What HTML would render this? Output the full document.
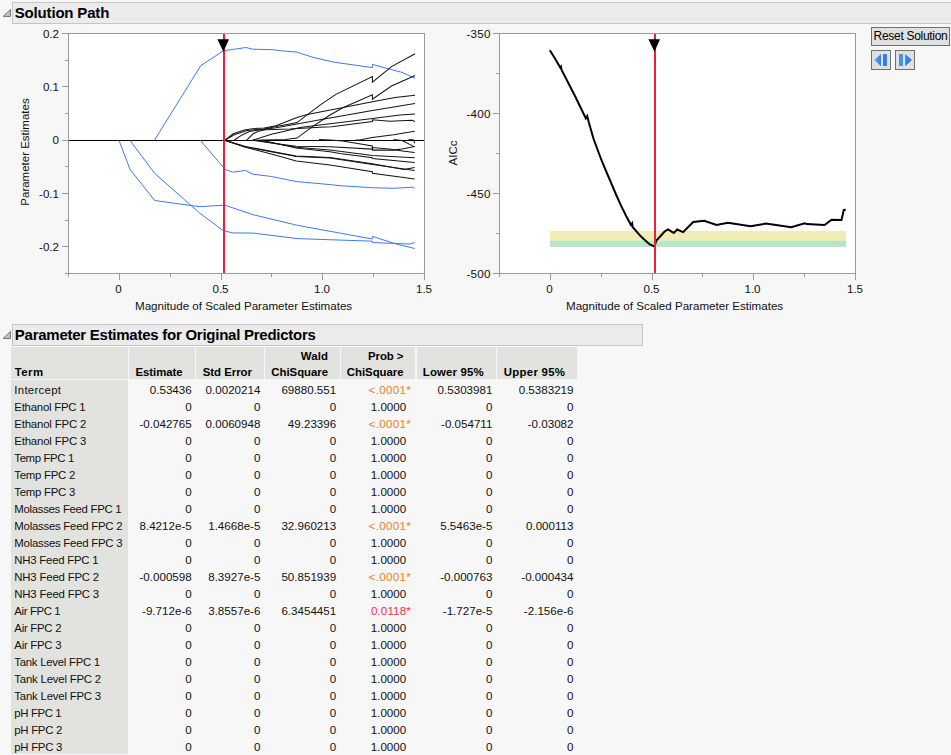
<!DOCTYPE html>
<html><head><meta charset="utf-8"><title>Solution Path</title>
<style>
html,body{margin:0;padding:0}
body{width:951px;height:755px;overflow:hidden;background:#f7f7f7;position:relative;font-family:"Liberation Sans",sans-serif;color:#111111}
.hdr{position:absolute;left:12px;background:#ebebeb;border:1px solid #c6c6c6;box-sizing:border-box;height:22px}
.hdr span{position:absolute;left:1.8px;top:0.5px;font-weight:bold;font-size:15px;line-height:17px;white-space:nowrap;color:#000}
.ax{position:absolute;font-size:11.6px;line-height:14px;white-space:nowrap;color:#111111}
.yl{text-align:right;width:40px}
.xl{text-align:center;width:40px}
.rot{position:absolute;font-size:11.5px;line-height:14px;white-space:nowrap;transform-origin:center center;transform:translate(-50%,-50%) rotate(-90deg)}
.th{position:absolute;background:#e2e2de;top:347px;height:32px}
.th i{font-style:normal}
.th span{position:absolute;right:12px;bottom:-0.5px;font-weight:bold;font-size:11.4px;line-height:16px;text-align:right;white-space:nowrap;color:#000}
.t{position:absolute;font-size:11.6px;line-height:15px;white-space:nowrap}
.term{left:14.3px;font-size:11.4px}
.num{text-align:right}
.org{color:#ee7f22;letter-spacing:0.3px}
.red{color:#ee3050;letter-spacing:0.1px}
.star{position:absolute;left:100%;top:0}
.btn{position:absolute;background:#e1e1e1;border:1px solid #707070;box-sizing:border-box}
</style></head><body>
<div class="hdr" style="top:2px;width:945px"><span style="letter-spacing:-0.18px">Solution Path</span></div>
<div class="hdr" style="top:324px;width:631px"><span style="letter-spacing:-0.255px">Parameter Estimates for Original Predictors</span></div>
<div style="position:absolute;left:11px;top:380px;width:117px;height:373.5px;background:#e2e2de"></div>
<div class="th" style="left:11px;width:117px"><span style="left:3.7px;right:auto"><i style="letter-spacing:0.446px;margin-right:-0.446px">Term</i></span></div>
<div class="th" style="left:129px;width:65.5px"><span><i style="letter-spacing:-0.073px;margin-right:0.073px">Estimate</i></span></div>
<div class="th" style="left:195.6px;width:68.4px"><span><i style="letter-spacing:-0.008px;margin-right:0.008px">Std Error</i></span></div>
<div class="th" style="left:265.3px;width:74.7px"><span><i style="letter-spacing:0.176px;margin-right:-0.176px">Wald</i><br><i style="letter-spacing:-0.041px;margin-right:0.041px">ChiSquare</i></span></div>
<div class="th" style="left:341.3px;width:74.2px"><span><i style="letter-spacing:-0.061px;margin-right:0.061px">Prob &gt;</i><br><i style="letter-spacing:-0.041px;margin-right:0.041px">ChiSquare</i></span></div>
<div class="th" style="left:416.9px;width:78.8px"><span><i style="letter-spacing:0.165px;margin-right:-0.165px">Lower 95%</i></span></div>
<div class="th" style="left:497px;width:80px"><span><i style="letter-spacing:0.292px;margin-right:-0.292px">Upper 95%</i></span></div>
<div class="t term" style="top:383.0px;letter-spacing:0.297px">Intercept</div>
<div class="t num" style="top:382.3px;right:759.3px">0.53436</div>
<div class="t num" style="top:382.3px;right:690.6px">0.0020214</div>
<div class="t num" style="top:382.3px;right:614.8px">69880.551</div>
<div class="t num" style="top:382.3px;right:458.6px">0.5303981</div>
<div class="t num" style="top:382.3px;right:377.5px">0.5383219</div>
<div class="t num org" style="top:382.3px;right:544.8px">&lt;.0001<span class="star">*</span></div>
<div class="t term" style="top:400.0px;letter-spacing:-0.237px">Ethanol FPC 1</div>
<div class="t num" style="top:399.3px;right:759.3px">0</div>
<div class="t num" style="top:399.3px;right:690.6px">0</div>
<div class="t num" style="top:399.3px;right:614.8px">0</div>
<div class="t num" style="top:399.3px;right:458.6px">0</div>
<div class="t num" style="top:399.3px;right:377.5px">0</div>
<div class="t num" style="top:399.3px;right:544.8px">1.0000</div>
<div class="t term" style="top:417.0px;letter-spacing:-0.175px">Ethanol FPC 2</div>
<div class="t num" style="top:416.3px;right:759.3px">-0.042765</div>
<div class="t num" style="top:416.3px;right:690.6px">0.0060948</div>
<div class="t num" style="top:416.3px;right:614.8px">49.23396</div>
<div class="t num" style="top:416.3px;right:458.6px">-0.054711</div>
<div class="t num" style="top:416.3px;right:377.5px">-0.03082</div>
<div class="t num org" style="top:416.3px;right:544.8px">&lt;.0001<span class="star">*</span></div>
<div class="t term" style="top:434.0px;letter-spacing:-0.175px">Ethanol FPC 3</div>
<div class="t num" style="top:433.3px;right:759.3px">0</div>
<div class="t num" style="top:433.3px;right:690.6px">0</div>
<div class="t num" style="top:433.3px;right:614.8px">0</div>
<div class="t num" style="top:433.3px;right:458.6px">0</div>
<div class="t num" style="top:433.3px;right:377.5px">0</div>
<div class="t num" style="top:433.3px;right:544.8px">1.0000</div>
<div class="t term" style="top:451.0px;letter-spacing:-0.361px">Temp FPC 1</div>
<div class="t num" style="top:450.3px;right:759.3px">0</div>
<div class="t num" style="top:450.3px;right:690.6px">0</div>
<div class="t num" style="top:450.3px;right:614.8px">0</div>
<div class="t num" style="top:450.3px;right:458.6px">0</div>
<div class="t num" style="top:450.3px;right:377.5px">0</div>
<div class="t num" style="top:450.3px;right:544.8px">1.0000</div>
<div class="t term" style="top:468.0px;letter-spacing:-0.251px">Temp FPC 2</div>
<div class="t num" style="top:467.3px;right:759.3px">0</div>
<div class="t num" style="top:467.3px;right:690.6px">0</div>
<div class="t num" style="top:467.3px;right:614.8px">0</div>
<div class="t num" style="top:467.3px;right:458.6px">0</div>
<div class="t num" style="top:467.3px;right:377.5px">0</div>
<div class="t num" style="top:467.3px;right:544.8px">1.0000</div>
<div class="t term" style="top:485.0px;letter-spacing:-0.251px">Temp FPC 3</div>
<div class="t num" style="top:484.3px;right:759.3px">0</div>
<div class="t num" style="top:484.3px;right:690.6px">0</div>
<div class="t num" style="top:484.3px;right:614.8px">0</div>
<div class="t num" style="top:484.3px;right:458.6px">0</div>
<div class="t num" style="top:484.3px;right:377.5px">0</div>
<div class="t num" style="top:484.3px;right:544.8px">1.0000</div>
<div class="t term" style="top:502.0px;letter-spacing:-0.299px">Molasses Feed FPC 1</div>
<div class="t num" style="top:501.3px;right:759.3px">0</div>
<div class="t num" style="top:501.3px;right:690.6px">0</div>
<div class="t num" style="top:501.3px;right:614.8px">0</div>
<div class="t num" style="top:501.3px;right:458.6px">0</div>
<div class="t num" style="top:501.3px;right:377.5px">0</div>
<div class="t num" style="top:501.3px;right:544.8px">1.0000</div>
<div class="t term" style="top:519.0px;letter-spacing:-0.247px">Molasses Feed FPC 2</div>
<div class="t num" style="top:518.3px;right:759.3px">8.4212e-5</div>
<div class="t num" style="top:518.3px;right:690.6px">1.4668e-5</div>
<div class="t num" style="top:518.3px;right:614.8px">32.960213</div>
<div class="t num" style="top:518.3px;right:458.6px">5.5463e-5</div>
<div class="t num" style="top:518.3px;right:377.5px">0.000113</div>
<div class="t num org" style="top:518.3px;right:544.8px">&lt;.0001<span class="star">*</span></div>
<div class="t term" style="top:536.0px;letter-spacing:-0.247px">Molasses Feed FPC 3</div>
<div class="t num" style="top:535.3px;right:759.3px">0</div>
<div class="t num" style="top:535.3px;right:690.6px">0</div>
<div class="t num" style="top:535.3px;right:614.8px">0</div>
<div class="t num" style="top:535.3px;right:458.6px">0</div>
<div class="t num" style="top:535.3px;right:377.5px">0</div>
<div class="t num" style="top:535.3px;right:544.8px">1.0000</div>
<div class="t term" style="top:553.0px;letter-spacing:-0.234px">NH3 Feed FPC 1</div>
<div class="t num" style="top:552.3px;right:759.3px">0</div>
<div class="t num" style="top:552.3px;right:690.6px">0</div>
<div class="t num" style="top:552.3px;right:614.8px">0</div>
<div class="t num" style="top:552.3px;right:458.6px">0</div>
<div class="t num" style="top:552.3px;right:377.5px">0</div>
<div class="t num" style="top:552.3px;right:544.8px">1.0000</div>
<div class="t term" style="top:570.0px;letter-spacing:-0.191px">NH3 Feed FPC 2</div>
<div class="t num" style="top:569.3px;right:759.3px">-0.000598</div>
<div class="t num" style="top:569.3px;right:690.6px">8.3927e-5</div>
<div class="t num" style="top:569.3px;right:614.8px">50.851939</div>
<div class="t num" style="top:569.3px;right:458.6px">-0.000763</div>
<div class="t num" style="top:569.3px;right:377.5px">-0.000434</div>
<div class="t num org" style="top:569.3px;right:544.8px">&lt;.0001<span class="star">*</span></div>
<div class="t term" style="top:587.0px;letter-spacing:-0.191px">NH3 Feed FPC 3</div>
<div class="t num" style="top:586.3px;right:759.3px">0</div>
<div class="t num" style="top:586.3px;right:690.6px">0</div>
<div class="t num" style="top:586.3px;right:614.8px">0</div>
<div class="t num" style="top:586.3px;right:458.6px">0</div>
<div class="t num" style="top:586.3px;right:377.5px">0</div>
<div class="t num" style="top:586.3px;right:544.8px">1.0000</div>
<div class="t term" style="top:604.0px;letter-spacing:-0.375px">Air FPC 1</div>
<div class="t num" style="top:603.3px;right:759.3px">-9.712e-6</div>
<div class="t num" style="top:603.3px;right:690.6px">3.8557e-6</div>
<div class="t num" style="top:603.3px;right:614.8px">6.3454451</div>
<div class="t num" style="top:603.3px;right:458.6px">-1.727e-5</div>
<div class="t num" style="top:603.3px;right:377.5px">-2.156e-6</div>
<div class="t num red" style="top:603.3px;right:544.8px">0.0118<span class="star">*</span></div>
<div class="t term" style="top:621.0px;letter-spacing:-0.264px">Air FPC 2</div>
<div class="t num" style="top:620.3px;right:759.3px">0</div>
<div class="t num" style="top:620.3px;right:690.6px">0</div>
<div class="t num" style="top:620.3px;right:614.8px">0</div>
<div class="t num" style="top:620.3px;right:458.6px">0</div>
<div class="t num" style="top:620.3px;right:377.5px">0</div>
<div class="t num" style="top:620.3px;right:544.8px">1.0000</div>
<div class="t term" style="top:638.0px;letter-spacing:-0.264px">Air FPC 3</div>
<div class="t num" style="top:637.3px;right:759.3px">0</div>
<div class="t num" style="top:637.3px;right:690.6px">0</div>
<div class="t num" style="top:637.3px;right:614.8px">0</div>
<div class="t num" style="top:637.3px;right:458.6px">0</div>
<div class="t num" style="top:637.3px;right:377.5px">0</div>
<div class="t num" style="top:637.3px;right:544.8px">1.0000</div>
<div class="t term" style="top:655.0px;letter-spacing:-0.269px">Tank Level FPC 1</div>
<div class="t num" style="top:654.3px;right:759.3px">0</div>
<div class="t num" style="top:654.3px;right:690.6px">0</div>
<div class="t num" style="top:654.3px;right:614.8px">0</div>
<div class="t num" style="top:654.3px;right:458.6px">0</div>
<div class="t num" style="top:654.3px;right:377.5px">0</div>
<div class="t num" style="top:654.3px;right:544.8px">1.0000</div>
<div class="t term" style="top:672.0px;letter-spacing:-0.200px">Tank Level FPC 2</div>
<div class="t num" style="top:671.3px;right:759.3px">0</div>
<div class="t num" style="top:671.3px;right:690.6px">0</div>
<div class="t num" style="top:671.3px;right:614.8px">0</div>
<div class="t num" style="top:671.3px;right:458.6px">0</div>
<div class="t num" style="top:671.3px;right:377.5px">0</div>
<div class="t num" style="top:671.3px;right:544.8px">1.0000</div>
<div class="t term" style="top:689.0px;letter-spacing:-0.200px">Tank Level FPC 3</div>
<div class="t num" style="top:688.3px;right:759.3px">0</div>
<div class="t num" style="top:688.3px;right:690.6px">0</div>
<div class="t num" style="top:688.3px;right:614.8px">0</div>
<div class="t num" style="top:688.3px;right:458.6px">0</div>
<div class="t num" style="top:688.3px;right:377.5px">0</div>
<div class="t num" style="top:688.3px;right:544.8px">1.0000</div>
<div class="t term" style="top:706.0px;letter-spacing:-0.377px">pH FPC 1</div>
<div class="t num" style="top:705.3px;right:759.3px">0</div>
<div class="t num" style="top:705.3px;right:690.6px">0</div>
<div class="t num" style="top:705.3px;right:614.8px">0</div>
<div class="t num" style="top:705.3px;right:458.6px">0</div>
<div class="t num" style="top:705.3px;right:377.5px">0</div>
<div class="t num" style="top:705.3px;right:544.8px">1.0000</div>
<div class="t term" style="top:723.0px;letter-spacing:-0.289px">pH FPC 2</div>
<div class="t num" style="top:722.3px;right:759.3px">0</div>
<div class="t num" style="top:722.3px;right:690.6px">0</div>
<div class="t num" style="top:722.3px;right:614.8px">0</div>
<div class="t num" style="top:722.3px;right:458.6px">0</div>
<div class="t num" style="top:722.3px;right:377.5px">0</div>
<div class="t num" style="top:722.3px;right:544.8px">1.0000</div>
<div class="t term" style="top:740.0px;letter-spacing:-0.289px">pH FPC 3</div>
<div class="t num" style="top:739.3px;right:759.3px">0</div>
<div class="t num" style="top:739.3px;right:690.6px">0</div>
<div class="t num" style="top:739.3px;right:614.8px">0</div>
<div class="t num" style="top:739.3px;right:458.6px">0</div>
<div class="t num" style="top:739.3px;right:377.5px">0</div>
<div class="t num" style="top:739.3px;right:544.8px">1.0000</div>
<div class="btn" style="left:871px;top:27px;width:79px;height:19px"><span style="position:absolute;left:1.6px;top:1.2px;font-size:12px;letter-spacing:-0.3px;line-height:14px;white-space:nowrap;color:#000">Reset Solution</span></div>
<div class="btn" style="left:871px;top:50px;width:20px;height:20px"></div>
<div class="btn" style="left:895px;top:50px;width:20px;height:20px"></div>
<svg width="951" height="755" viewBox="0 0 951 755" style="position:absolute;left:0;top:0">
<!-- left plot -->
<rect x="68.5" y="33.5" width="356" height="240" fill="#fff" stroke="#9a9a9a" stroke-width="1"/>
<line x1="62" y1="33.5" x2="68" y2="33.5" stroke="#9a9a9a" stroke-width="1"/>
<line x1="65" y1="60.5" x2="68" y2="60.5" stroke="#9a9a9a" stroke-width="1"/>
<line x1="62" y1="86.5" x2="68" y2="86.5" stroke="#9a9a9a" stroke-width="1"/>
<line x1="65" y1="113.5" x2="68" y2="113.5" stroke="#9a9a9a" stroke-width="1"/>
<line x1="62" y1="140.5" x2="68" y2="140.5" stroke="#9a9a9a" stroke-width="1"/>
<line x1="65" y1="166.5" x2="68" y2="166.5" stroke="#9a9a9a" stroke-width="1"/>
<line x1="62" y1="193.5" x2="68" y2="193.5" stroke="#9a9a9a" stroke-width="1"/>
<line x1="65" y1="220.5" x2="68" y2="220.5" stroke="#9a9a9a" stroke-width="1"/>
<line x1="62" y1="246.5" x2="68" y2="246.5" stroke="#9a9a9a" stroke-width="1"/>
<line x1="65" y1="273.5" x2="68" y2="273.5" stroke="#9a9a9a" stroke-width="1"/>
<line x1="68.5" y1="273" x2="68.5" y2="277" stroke="#9a9a9a" stroke-width="1"/>
<line x1="119.5" y1="273" x2="119.5" y2="280" stroke="#9a9a9a" stroke-width="1"/>
<line x1="170.5" y1="273" x2="170.5" y2="277" stroke="#9a9a9a" stroke-width="1"/>
<line x1="221.5" y1="273" x2="221.5" y2="280" stroke="#9a9a9a" stroke-width="1"/>
<line x1="271.5" y1="273" x2="271.5" y2="277" stroke="#9a9a9a" stroke-width="1"/>
<line x1="322.5" y1="273" x2="322.5" y2="280" stroke="#9a9a9a" stroke-width="1"/>
<line x1="373.5" y1="273" x2="373.5" y2="277" stroke="#9a9a9a" stroke-width="1"/>
<line x1="424.5" y1="273" x2="424.5" y2="280" stroke="#9a9a9a" stroke-width="1"/>
<line x1="69" y1="140.5" x2="424" y2="140.5" stroke="#000" stroke-width="1.2"/>
<polyline points="119.0,140.3 129.9,169.2 154.7,200.5 199.8,206.7 224.6,205.1 253.1,214.7 297.3,225.3 372.3,239.0 372.3,236.4 396.6,244.1 414.7,248.5" fill="none" stroke="#3e7af4" stroke-width="1.0" stroke-linejoin="miter" />
<polyline points="129.9,140.3 154.7,173.4 199.8,213.2 223.1,230.6 232.7,232.9 253.1,233.1 297.3,238.6 372.3,241.2 372.3,242.5 409.8,244.1 414.7,242.5" fill="none" stroke="#3e7af4" stroke-width="1.0" stroke-linejoin="miter" />
<polyline points="154.4,140.3 200.7,65.7 223.4,50.8 245.9,47.5 252.7,49.2 272.2,49.7 280.0,50.7 296.1,52.0 313.9,57.6 334.2,62.2 372.4,67.6 372.4,64.4 390.2,69.3 402.0,72.4 415.1,78.3" fill="none" stroke="#3e7af4" stroke-width="1.0" stroke-linejoin="miter" />
<polyline points="200.3,140.3 223.1,167.0 225.0,169.4 232.7,172.2 245.4,170.4 253.0,174.2 270.8,176.4 296.2,181.5 330.0,184.6 340.0,185.7 372.4,187.7 393.6,188.3 412.6,187.2 414.7,188.3" fill="none" stroke="#3e7af4" stroke-width="1.0" stroke-linejoin="miter" />
<polyline points="224.7,140.3 234.7,134.6 247.2,130.5 254.6,129.8 264.2,129.0 275.9,126.4 290.0,123.9 297.0,122.6 320.7,104.6 335.9,94.4 372.4,76.6 372.4,82.2 391.9,66.4 415.1,53.7" fill="none" stroke="#151515" stroke-width="1.05" stroke-linejoin="miter" />
<polyline points="253.0,140.3 285.3,139.5 297.0,138.1 313.2,126.1 330.0,115.0 343.3,107.5 372.4,94.7 372.4,99.3 391.5,86.0 415.1,75.4" fill="none" stroke="#151515" stroke-width="1.05" stroke-linejoin="miter" />
<polyline points="224.7,140.3 233.2,133.8 244.3,130.1 252.4,128.7 264.2,127.9 275.9,125.7 290.0,120.2 297.0,117.4 306.2,114.8 320.0,112.1 343.3,107.5 372.4,101.7 395.0,97.5 415.0,95.2" fill="none" stroke="#151515" stroke-width="1.05" stroke-linejoin="miter" />
<polyline points="234.0,140.3 242.1,134.9 249.4,131.6 255.3,130.5 276.0,127.8 297.0,124.0 320.0,119.7 372.4,110.4 415.0,103.4" fill="none" stroke="#151515" stroke-width="1.05" stroke-linejoin="miter" />
<polyline points="252.4,140.3 271.5,134.2 290.0,130.1 300.0,127.5 320.0,125.0 372.4,118.6 400.0,115.0 415.0,113.9" fill="none" stroke="#151515" stroke-width="1.05" stroke-linejoin="miter" />
<polyline points="246.5,140.3 253.1,133.8 258.3,131.2 265.6,129.8 290.0,129.0 320.0,127.3 331.7,126.7 372.4,121.5 372.4,119.7 390.0,121.2 412.0,120.3 415.0,121.5" fill="none" stroke="#151515" stroke-width="1.05" stroke-linejoin="miter" />
<polyline points="355.0,140.3 360.7,139.7 372.4,137.6 393.6,134.8 414.7,131.3" fill="none" stroke="#151515" stroke-width="1.05" stroke-linejoin="miter" />
<polyline points="393.6,139.5 402.0,140.6 414.7,146.9" fill="none" stroke="#151515" stroke-width="1.05" stroke-linejoin="miter" />
<polyline points="408.0,140.3 410.5,139.5 413.7,140.0 414.7,143.2" fill="none" stroke="#151515" stroke-width="1.05" stroke-linejoin="miter" />
<polyline points="319.0,139.6 330.0,140.0 342.7,141.1 372.4,145.9 372.4,150.1 393.6,150.1 402.0,149.1 414.7,146.4" fill="none" stroke="#151515" stroke-width="1.05" stroke-linejoin="miter" />
<polyline points="253.0,140.3 275.0,143.5 296.2,146.3 330.0,146.7 372.4,149.1 372.4,147.5 389.3,149.1 404.2,151.2 414.7,152.5" fill="none" stroke="#151515" stroke-width="1.05" stroke-linejoin="miter" />
<polyline points="257.0,140.3 296.2,147.2 330.0,150.1 372.4,155.4 414.7,157.8" fill="none" stroke="#151515" stroke-width="1.05" stroke-linejoin="miter" />
<polyline points="262.0,140.3 296.2,148.0 330.0,151.7 340.0,153.5 372.4,157.8 372.4,158.6 414.7,162.6" fill="none" stroke="#151515" stroke-width="1.05" stroke-linejoin="miter" />
<polyline points="224.7,140.3 245.4,146.5 296.2,156.0 330.0,157.5 372.4,163.7 404.0,169.5 414.7,167.4" fill="none" stroke="#151515" stroke-width="1.05" stroke-linejoin="miter" />
<polyline points="224.7,140.3 245.4,146.9 296.2,156.6 330.0,158.1 372.4,164.4 414.7,170.5" fill="none" stroke="#151515" stroke-width="1.05" stroke-linejoin="miter" />
<polyline points="224.7,140.3 245.4,147.2 275.0,155.0 296.2,161.1 330.0,165.0 372.4,171.8 372.4,173.2 414.7,178.9" fill="none" stroke="#151515" stroke-width="1.05" stroke-linejoin="miter" />
<rect x="223" y="34" width="2" height="239" fill="#ee1f38"/>
<polygon points="217.4,39.3 229,39.3 223.4,51.8" fill="#000"/>
<!-- right plot -->
<rect x="499.5" y="33.5" width="356" height="240" fill="#fff" stroke="#9a9a9a" stroke-width="1"/>
<line x1="493" y1="33.5" x2="499" y2="33.5" stroke="#9a9a9a" stroke-width="1"/>
<line x1="496" y1="73.5" x2="499" y2="73.5" stroke="#9a9a9a" stroke-width="1"/>
<line x1="493" y1="113.5" x2="499" y2="113.5" stroke="#9a9a9a" stroke-width="1"/>
<line x1="496" y1="153.5" x2="499" y2="153.5" stroke="#9a9a9a" stroke-width="1"/>
<line x1="493" y1="193.5" x2="499" y2="193.5" stroke="#9a9a9a" stroke-width="1"/>
<line x1="496" y1="233.5" x2="499" y2="233.5" stroke="#9a9a9a" stroke-width="1"/>
<line x1="493" y1="273.5" x2="499" y2="273.5" stroke="#9a9a9a" stroke-width="1"/>
<line x1="499.5" y1="273" x2="499.5" y2="277" stroke="#9a9a9a" stroke-width="1"/>
<line x1="550.5" y1="273" x2="550.5" y2="280" stroke="#9a9a9a" stroke-width="1"/>
<line x1="601.5" y1="273" x2="601.5" y2="277" stroke="#9a9a9a" stroke-width="1"/>
<line x1="652.5" y1="273" x2="652.5" y2="280" stroke="#9a9a9a" stroke-width="1"/>
<line x1="702.5" y1="273" x2="702.5" y2="277" stroke="#9a9a9a" stroke-width="1"/>
<line x1="753.5" y1="273" x2="753.5" y2="280" stroke="#9a9a9a" stroke-width="1"/>
<line x1="804.5" y1="273" x2="804.5" y2="277" stroke="#9a9a9a" stroke-width="1"/>
<line x1="855.5" y1="273" x2="855.5" y2="280" stroke="#9a9a9a" stroke-width="1"/>
<rect x="550" y="231" width="296" height="9.5" fill="#f2edb3"/>
<rect x="550" y="240.5" width="296" height="6.5" fill="#b9e8c0"/>
<polyline points="549.8,50.3 555.0,58.5 560.2,67.5 560.9,66.6 561.6,70.0 575.0,96.0 585.8,118.3 587.2,116.0 589.0,123.0 593.6,139.0 601.4,160.0 606.0,171.0 610.7,181.9 615.8,194.0 620.8,205.2 626.0,215.8 630.9,224.8 632.2,223.1 632.6,227.0 641.0,236.6 649.4,244.2 654.5,246.7 656.2,240.8 664.6,231.5 668.0,229.4 673.8,232.9 677.2,229.5 683.1,232.1 693.2,222.0 704.2,220.7 716.5,224.9 727.9,222.8 750.6,226.2 765.8,223.6 791.3,227.3 804.6,223.2 806.5,224.1 824.5,225.1 831.7,219.8 841.5,220.0 843.8,209.9 845.7,209.7" fill="none" stroke="#000" stroke-width="2" stroke-linejoin="miter" stroke-linejoin="round"/>
<rect x="654" y="34" width="2" height="239" fill="#ee1f38"/>
<polygon points="648.4,39.3 660,39.3 654.5,51.8" fill="#000"/>
<!-- disclosure triangles -->
<polygon points="3.2,16.4 10.4,9.6 10.4,16.4" fill="#c6c6c6" stroke="#6e6e6e" stroke-width="1" stroke-linejoin="miter"/>
<polygon points="3.2,338.4 10.4,331.6 10.4,338.4" fill="#c6c6c6" stroke="#6e6e6e" stroke-width="1" stroke-linejoin="miter"/>
<!-- button icons -->
<defs>
<linearGradient id="g1" x1="0" x2="1"><stop offset="0" stop-color="#6aa6f0"/><stop offset="1" stop-color="#2f80e8"/></linearGradient>
<linearGradient id="g2" x1="0" x2="1"><stop offset="0" stop-color="#2f80e8"/><stop offset="1" stop-color="#2f80e8"/></linearGradient>
</defs>
<polygon points="874.2,60.1 881,54 881,66.2" fill="url(#g1)"/>
<rect x="883" y="54" width="4" height="12" fill="#2f80e8"/>
<rect x="899" y="54" width="4" height="12" fill="#4a93ec"/>
<polygon points="905.2,54 912,60.1 905.2,66.2" fill="#2f80e8"/>
</svg>
<!-- axis labels left -->
<div class="ax yl" style="left:19px;top:26.5px">0.2</div>
<div class="ax yl" style="left:19px;top:79.8px">0.1</div>
<div class="ax yl" style="left:19px;top:133.2px">0</div>
<div class="ax yl" style="left:19px;top:186.5px">-0.1</div>
<div class="ax yl" style="left:19px;top:239.8px">-0.2</div>
<div class="ax xl" style="left:98.5px;top:282px">0</div>
<div class="ax xl" style="left:200.5px;top:282px">0.5</div>
<div class="ax xl" style="left:302px;top:282px">1.0</div>
<div class="ax xl" style="left:404px;top:282px">1.5</div>
<div class="ax" style="left:135px;top:298.5px" id="xt1" >Magnitude of Scaled Parameter Estimates</div>
<div class="rot" style="left:25px;top:152px">Parameter Estimates</div>
<!-- axis labels right -->
<div class="ax yl" style="left:450.5px;top:26.5px;letter-spacing:0.3px;margin-left:0.3px">-350</div>
<div class="ax yl" style="left:450.5px;top:106.5px;letter-spacing:0.3px;margin-left:0.3px">-400</div>
<div class="ax yl" style="left:450.5px;top:186.5px;letter-spacing:0.3px;margin-left:0.3px">-450</div>
<div class="ax yl" style="left:450.5px;top:266.5px;letter-spacing:0.3px;margin-left:0.3px">-500</div>
<div class="ax xl" style="left:529.5px;top:282px">0</div>
<div class="ax xl" style="left:631.5px;top:282px">0.5</div>
<div class="ax xl" style="left:732.5px;top:282px">1.0</div>
<div class="ax xl" style="left:835px;top:282px">1.5</div>
<div class="ax" style="left:566px;top:298.5px" id="xt2" >Magnitude of Scaled Parameter Estimates</div>
<div class="rot" style="left:452.5px;top:152.5px">AICc</div>
</body></html>
